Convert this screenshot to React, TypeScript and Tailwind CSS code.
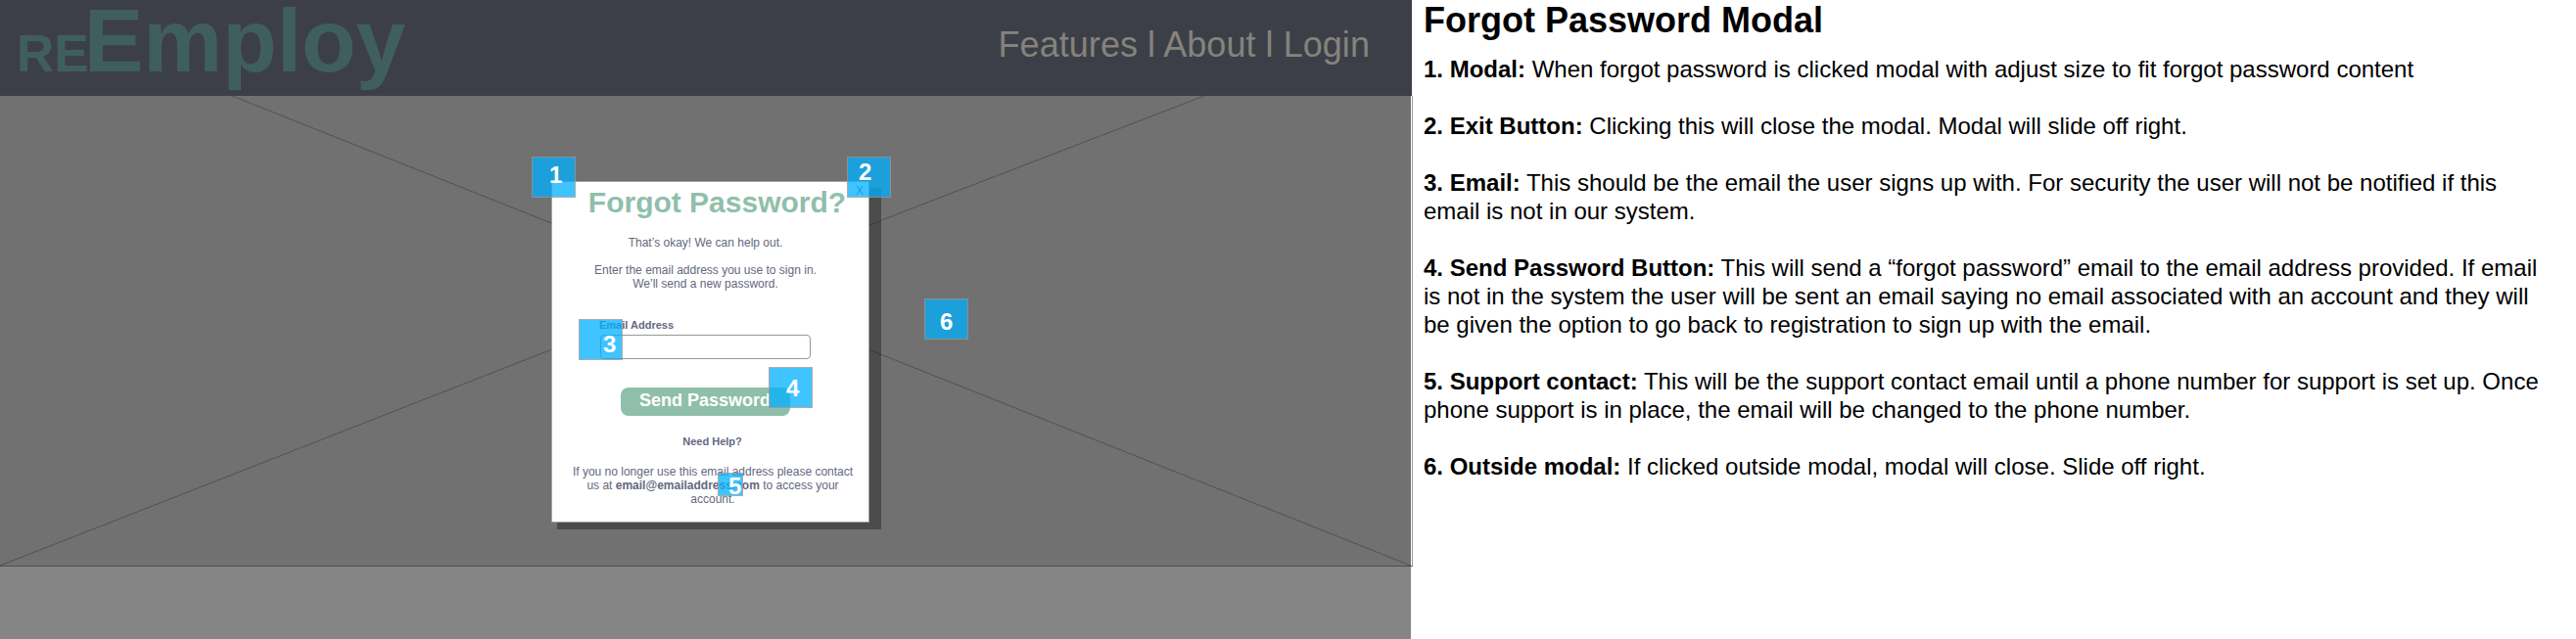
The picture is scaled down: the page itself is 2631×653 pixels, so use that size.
import type { ReactNode } from "react";

function Badge({ n, box, digit }: { n: number; box: string; digit: string }) {
  return (
    <div
      className={`absolute border border-[#979797]/80 bg-[#00b0ff]/75 bg-clip-padding text-2xl leading-[27px] font-bold text-white ${box}`}
    >
      <span className={`absolute ${digit}`}>{n}</span>
    </div>
  );
}

function Note({ title, children }: { title: string; children: ReactNode }) {
  return (
    <p>
      <b>{title}</b> {children}
    </p>
  );
}

function Header() {
  return (
    <header className="flex h-[98px] w-[1442px] items-start justify-between bg-[#3d3f48] pr-[43px] pl-[17px]">
      <div className="flex h-[98px] items-baseline font-bold text-[#3f5f5d]">
        <span className="-mr-[5px] text-[53px] leading-none">RE</span>
        <span className="text-[91px] leading-[83px]">Employ</span>
      </div>
      <nav className="pt-[25px] text-4xl leading-[41px] tracking-[0.05px] whitespace-pre text-[#85837c]">
        Features l About l Login
      </nav>
    </header>
  );
}

function Modal() {
  return (
    <section className="relative ml-[563px] flex h-[349px] w-[325px] flex-col border border-[#a3a3a3] bg-white pt-[3px] text-center text-xs leading-[14px] whitespace-nowrap text-[#646880]">
      <h2 className="pl-[14px] text-[30px] leading-[35px] font-bold text-[#8fbfaa]">Forgot Password?</h2>
      <button className="absolute top-[2px] left-[310px] text-xs leading-[14px]">X</button>
      <p className="mt-[17px] pr-[10px]">That’s okay! We can help out.</p>
      <p className="mt-[14px] pr-[10px]">
        Enter the email address you use to sign in.
        <br />
        We’ll send a new password.
      </p>
      <label className="mt-[29px] pl-[48px] text-left text-[11px] leading-[12px] font-bold">Email Address</label>
      <div className="mt-1 ml-[49px] h-[25px] w-[215px] rounded border border-[#979797]" />
      <button className="mt-[29px] ml-[70px] h-[29px] w-[173px] rounded-lg bg-[#8fbfaa] pb-[3px] pl-[19px] text-left text-lg leading-[20px] font-bold text-white">
        Send Password
      </button>
      <h3 className="mt-5 pl-1 text-[11px] leading-[12px] font-bold">Need Help?</h3>
      <p className="mt-[18px] pl-[5px]">
        If you no longer use this email address please contact
        <br />
        us at <b>email@emailaddress.com</b> to access your
        <br />
        account.
      </p>
    </section>
  );
}

function Wireframe() {
  return (
    <div className="relative h-[653px] w-[1443px] shrink-0">
      <Header />
      <main className="relative h-[481px] border-r border-b border-r-[#9a9a9a] border-b-[#4f4f4f]">
        <div className="h-full w-[1441px] bg-[#717171] pt-[87px]">
          <svg className="absolute top-0 left-0" width="1441" height="480" viewBox="0 0 1441 480" stroke="#525252" strokeWidth="1">
            <path d="M237 0L1441 480M0 480L930 115.5L1230 0" fill="none" />
          </svg>
          <div className="absolute top-[94px] left-[569px] h-[349px] w-[331px] bg-black/32" />
          <Modal />
        </div>
      </main>
      <footer className="h-[74px] w-[1441px] bg-[#858585]" />
      <Badge n={1} box="left-[543px] top-[160px] h-[42px] w-[45px]" digit="left-[17px] top-[4px]" />
      <Badge n={2} box="left-[865px] top-[160px] h-[42px] w-[45px]" digit="left-[11px] top-[1px]" />
      <Badge n={3} box="left-[591px] top-[326px] h-[42px] w-[45px]" digit="left-[24px] top-[11px]" />
      <Badge n={4} box="left-[785px] top-[375px] h-[42px] w-[45px]" digit="left-[17px] top-[7px]" />
      <Badge n={5} box="left-[733px] top-[483px] h-[24px] w-[26px]" digit="left-[10px] top-[-1px]" />
      <Badge n={6} box="left-[944px] top-[305px] h-[42px] w-[45px]" digit="left-[15px] top-[9px]" />
    </div>
  );
}

export default function App() {
  return (
    <div className="flex h-[653px] w-[2631px] overflow-hidden bg-white font-['Liberation_Sans',Arial,sans-serif]">
      <Wireframe />
      <aside className="pl-[11px] whitespace-nowrap text-black">
        <h1 className="text-4xl leading-[41px] font-bold">Forgot Password Modal</h1>
        <div className="mt-[15px] flex flex-col gap-[29px] text-2xl leading-[29px]">
          <Note title="1. Modal:">When forgot password is clicked modal with adjust size to fit forgot password content</Note>
          <Note title="2. Exit Button:">Clicking this will close the modal. Modal will slide off right.</Note>
          <Note title="3. Email:">
            This should be the email the user signs up with. For security the user will not be notified if this
            <br />
            email is not in our system.
          </Note>
          <Note title="4. Send Password Button:">
            This will send a “forgot password” email to the email address provided. If email
            <br />
            is not in the system the user will be sent an email saying no email associated with an account and they will
            <br />
            be given the option to go back to registration to sign up with the email.
          </Note>
          <Note title="5. Support contact:">
            This will be the support contact email until a phone number for support is set up. Once
            <br />
            phone support is in place, the email will be changed to the phone number.
          </Note>
          <Note title="6. Outside modal:">If clicked outside modal, modal will close. Slide off right.</Note>
        </div>
      </aside>
    </div>
  );
}
